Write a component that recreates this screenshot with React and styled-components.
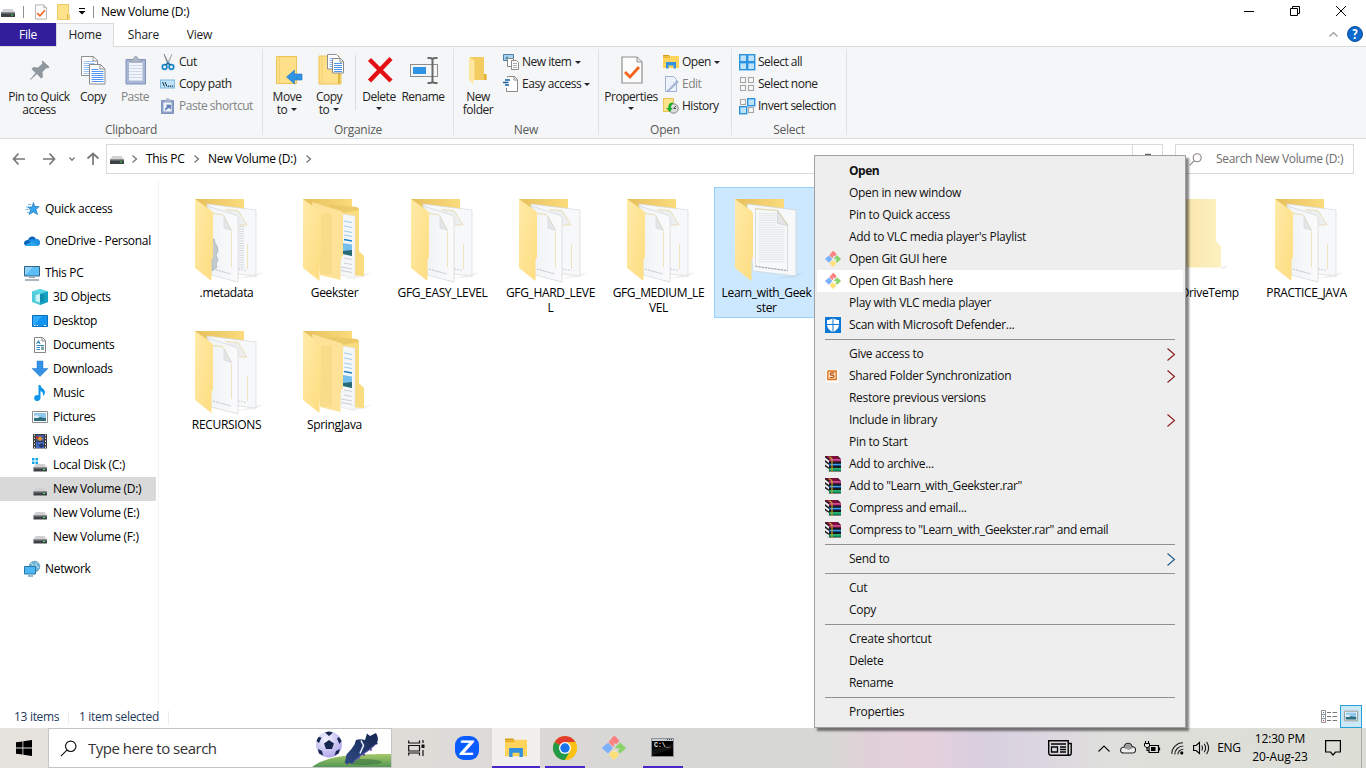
import React from 'react';
import styled, { createGlobalStyle, css } from 'styled-components';

const GlobalStyle = createGlobalStyle`
  * { box-sizing: border-box; }
  body { margin: 0; background: #fff; overflow: hidden; }
  svg { display: block; flex: none; overflow: visible; }
`;

/* ---------- frame ---------- */
const Screen = styled.div`
  width: 1366px; height: 768px; display: flex; flex-direction: column;
  position: relative; background: #fff; color: #000;
  font: 12px/16px "Open Sans", "Noto Sans", sans-serif;
  letter-spacing: -0.31px; white-space: nowrap;
`;

const TitleBar = styled.header`
  height: 23px; flex: none; display: flex; align-items: center; padding-right: 2px;
`;
const QuickTools = styled.div`
  display: flex; align-items: center; width: 101px; height: 23px;
`;
const ToolSlot = styled.span`
  width: ${p => p.$w}px; display: flex; justify-content: center;
`;
const ToolRule = styled.i` width: 1px; height: 12px; background: #8f8f8f; `;
const Grow = styled.div` flex: 1; `;
const WinButton = styled.button`
  width: 46px; height: 21px; padding: 0; border: 0; background: none; margin-bottom: 2px;
  display: flex; justify-content: center; align-items: center;
`;

const TabStrip = styled.nav`
  height: 24px; flex: none; display: flex; align-items: stretch;
  border-bottom: 1px solid #dadbdc; padding-right: 3px;
`;
const Tab = styled.div`
  width: ${p => p.$w}px; display: flex; align-items: center; justify-content: center;
  color: #222; letter-spacing: -0.2px;
  ${p => p.$kind === 'file' && css` background: #321e9b; color: #fff; `}
  ${p => p.$kind === 'open' && css`
    background: #f5f6f7; border: 1px solid #dadbdc; border-bottom: 0; margin-bottom: -1px; padding-bottom: 1px;
  `}
`;
const TabEnd = styled.div` display: flex; align-items: center; gap: 9px; margin-left: auto; margin-top: -1px; `;

/* ---------- ribbon ---------- */
const Ribbon = styled.section`
  height: 92px; flex: none; display: flex; background: #f5f6f7; letter-spacing: -0.48px;
  border-bottom: 1px solid #dadbdc; color: #222;
`;
const Group = styled.div`
  width: ${p => p.$w}px; margin: 2px 0 3px; border-right: 1px solid #e0e1e3;
  display: flex; flex-direction: column;
`;
const GroupBody = styled.div` height: 72px; flex: none; display: flex; padding-left: ${p => p.$pad}px; `;
const GroupName = styled.div` flex: none; text-align: center; color: #5a5a5a; line-height: 17px; letter-spacing: -0.25px; `;
const BigButton = styled.div`
  width: ${p => p.$w}px; flex: none; display: flex; flex-direction: column; align-items: center;
  color: ${p => (p.$off ? '#838383' : '#222')};
`;
const BigIcon = styled.span` height: 41px; display: flex; align-items: center; justify-content: center; padding: 1px 0 0 1px; margin-bottom: -0.5px; `;
const BigText = styled.span` line-height: 13px; text-align: center; white-space: nowrap; display: flex; align-items: center; gap: 4px; min-height: ${p => p.$tiny ? 11 : 13}px; `;
const BodyRule = styled.i` width: 1px; height: 55px; margin: 6px 2px 0 5px; background: #dcdddf; flex: none; `;
const SmallList = styled.div` margin-left: ${p => p.$left}px; padding-top: 2px; `;
const SmallButton = styled.div`
  height: 22px; display: flex; align-items: center; gap: 3px;
  color: ${p => (p.$off ? '#838383' : '#222')};
`;
const Caret = styled.i`
  border: 3px solid transparent; border-top-color: #222; border-bottom: 0; margin-left: ${p => p.$left || 0}px;
`;

/* ---------- address row ---------- */
const NavRow = styled.div` height: 41px; flex: none; display: flex; align-items: center; padding-bottom: 1px; `;
const NavArrows = styled.div` width: 106px; display: flex; align-items: center; `;
const AddressBox = styled.div`
  width: 1057px; height: 30px; border: 1px solid #d9d9d9; display: flex; align-items: center; padding-left: 3px;
`;
const Crumb = styled.span` width: ${p => p.$w}px; `;
const CrumbSep = styled.span` width: ${p => p.$w || 23}px; padding-right: ${p => p.$lead || 0}px; display: flex; justify-content: center; `;
const Refresh = styled.span`
  width: 30px; height: 28px; border-left: 1px solid #d9d9d9; margin-left: auto;
  display: flex; align-items: center; justify-content: center;
`;
const SearchBox = styled.div`
  width: 179px; height: 30px; margin-left: 12px; border: 1px solid #d9d9d9; color: #6d6d6d;
  display: flex; align-items: center; padding-left: 13px; gap: 14px;
`;

/* ---------- body ---------- */
const Body = styled.main` flex: 1; display: flex; min-height: 0; `;
const Tree = styled.aside` width: 159px; flex: none; border-right: 1px solid #f3f3f3; padding-top: 17px; height: 523px; `;
const TreeRow = styled.div`
  width: 156px; height: 24px; display: flex; align-items: center; gap: 5px;
  padding-left: ${p => (p.$root ? 24 : 32)}px; margin-bottom: ${p => p.$gap || 0}px;
  background: ${p => (p.$on ? '#d9d9d9' : 'none')};
`;
const Files = styled.div`
  padding: 7px 0 0 15px; display: grid; grid-template-columns: repeat(11, 106px);
  grid-auto-rows: 131px; gap: 1px 2px; align-content: start;
`;
const Tile = styled.div`
  grid-column: ${p => p.$col || 'auto'};
  height: ${p => (p.$on ? 131 : 116)}px; padding: 11px 0 0; border: 1px solid ${p => (p.$on ? '#99d1ff' : 'transparent')};
  background: ${p => (p.$on ? '#cce8ff' : 'none')};
  display: flex; flex-direction: column; align-items: center;
`;
const TileName = styled.span` line-height: 15px; text-align: center; margin: 2px 1px 0 0; letter-spacing: -0.34px; `;

const StatusBar = styled.footer`
  height: 24px; flex: none; display: flex; align-items: center; color: #1e395b; padding-left: 14px;
`;
const StatusCell = styled.span`
  width: ${p => p.$w}px; height: 13px; display: flex; align-items: center; border-right: 1px solid #ececec;
  margin: 2px 10px 0 0;
`;
const ViewSwitch = styled.div` margin-left: auto; display: flex; align-items: center; gap: 3px; padding-right: 4px; `;
const ViewOn = styled.span`
  width: 22px; height: 23px; border: 1px solid #26a0da; background: #cbe8f6; display: flex; align-items: center; justify-content: center;
`;

/* ---------- menu ---------- */
const Menu = styled.div`
  position: absolute; left: 814px; top: 155px; width: 372px; height: 573px;
  background: #eee; border: 1px solid #a0a0a0; padding: 4px 2px;
  box-shadow: 3px 3px 2px rgba(0, 0, 0, .48); color: #111; z-index: 2;
`;
const MenuItem = styled.div`
  height: 22px; display: flex; align-items: center; padding: 0 8px; 
  background: ${p => (p.$hot ? '#fff' : 'none')}; font-weight: ${p => (p.$bold ? 700 : 400)};
  letter-spacing: ${p => (p.$bold ? -0.5 : p.$tight ? -0.4 : -0.3)}px;
`;
const MenuIcon = styled.span` width: 24px; flex: none; `;
const MenuArrow = styled.span` margin-left: auto; `;
const MenuRule = styled.hr` border: 0; height: 1px; background: #919191; margin: 3px 8px; `;

/* ---------- taskbar ---------- */
const Taskbar = styled.div`
  height: 40px; flex: none; display: flex; align-items: stretch; 
  background: linear-gradient(90deg, #e6e2dd 0, #e0dcd8 390px, #dedad7 450px, #d9d8d6 560px, #d6d6d5 700px, #d7d8d3 830px, #e0d0d8 870px, #e4d0dc 930px, #d8cfdf 985px, #dbd6e0 1040px, #dfdfdb 1110px, #dcddd5 1366px);
`;
const StartButton = styled.div` width: 48px; display: flex; align-items: center; justify-content: center; `;
const TaskSearch = styled.div`
  width: 344px; background: #fff; border: 1px solid #c6c5c4; display: flex; align-items: center; padding-left: 11px;
  font-size: 15px; letter-spacing: -0.5px; color: #333; gap: 11px; position: relative; overflow: hidden;
`;
const TaskArt = styled.span` margin-left: auto; `;
const TaskButton = styled.div`
  width: ${p => p.$w}px; margin-left: ${p => p.$left || 0}px; display: flex; align-items: center; justify-content: center;
  border-bottom: 2px solid ${p => (p.$run ? '#4a25c9' : 'transparent')}; padding-top: 2px;
  background: ${p => (p.$on ? '#f1f0ef' : 'none')}; background-clip: padding-box;
`;
const Tray = styled.div` margin-left: auto; display: flex; align-items: center; width: 326px; `;
const TrayIcon = styled.span` width: ${p => p.$w}px; display: flex; justify-content: center; letter-spacing: -0.35px; `;
const Clock = styled.div` width: 68px; text-align: center; line-height: 18px; letter-spacing: -0.15px; `;
const PeekEdge = styled.i` width: 1px; align-self: stretch; background: #aaa; margin-left: auto; margin-right: 4px; `;

/* ---------- icons ---------- */
const Svg = ({ w = 16, h = w, children, ...rest }) => (
  <svg width={w} height={h} viewBox={`0 0 ${w} ${h}`} fill="none" {...rest}>{children}</svg>
);

const Drive = ({ os }) => (
  <Svg>
    {os && <path d="M0 1h2.500v2.500H0zM3.500 1H6v2.500H3.500zM0 4.500h2.500V7H0zM3.500 4.500H6V7H3.500z" fill="#12a5e8" />}
    <path d="M3.500 7h9L14.500 10.500H1.500z" fill="#cfd1d3" />
    <path d="M1.500 10.500h13.500v4H1.500z" fill="#3d4245" /><path d="M1.500 10.500h13.500v1H1.500z" fill="#8a8d90" />
    <path d="M11 12h2v1h-2z" fill="#3fe05c" />
  </Svg>
);
const SmallDrive = () => (
  <Svg w={14} h={12}>
    <path d="M2.500 3h9L14 6.500H0z" fill="#cfd1d3" /><path d="M0 6.500h14V11H0z" fill="#3d4245" />
    <path d="M0 6.500h14v1H0z" fill="#85888b" /><path d="M10 8.500h2v1h-2z" fill="#3fe05c" />
  </Svg>
);
const CheckPage = ({ w = 12, h = 16 }) => (
  <svg width={w} height={h} viewBox="0 0 22 28" fill="none">
    <path d="M1 1h15l5 5v21H1z" fill="#fcfcfc" stroke="#8f8f8f" strokeWidth="1.200" />
    <path d="M16 1v5h5" fill="#e4e4e4" stroke="#8f8f8f" strokeWidth="1" />
    <path d="M4 16l5 5 9-10" stroke="#f2641c" strokeWidth="2.800" />
  </svg>
);
const MiniFolder = () => (
  <Svg w={13} h={16}><path d="M.5.5h11v9l1 1v5H.5z" fill="#ffe28a" stroke="#eccb66" /><path d="M10.500 10v5" stroke="#d9b347" /></Svg>
);
const Pin = () => (
  <Svg w={22} h={22}><path d="M13.500 1.500l7 6.500-1.500 1.500-1.500-.5-4 4 .5 5-2 1.500-4-4.500L1.500 21l-.5-.5L6.500 14 2.500 10l2-2 4.500.5 4.500-4-.800-1.500z" fill="#8f979e" /></Svg>
);
const Lines = ({ x, y, w, n, step = 2, color = '#6aa0ea' }) => (
  <g fill={color}>{Array.from({ length: n }, (_, i) => <rect key={i} x={x} y={y + i * step} width={w} height="1" />)}</g>
);
const CopyPages = () => (
  <Svg w={25} h={29}>
    <path d="M.5.5h12l4 4v15H.5z" fill="#fff" stroke="#8f8f8f" /><path d="M12 .5v4.500h4" stroke="#8f8f8f" />
    <Lines x={2.500} y={5} w={11} n={7} color="#9cc3f5" />
    <path d="M8.500 8.500h11l4.500 4.500v15H8.500z" fill="#fff" stroke="#8a8a8a" /><path d="M19 8.500V13h5" stroke="#8a8a8a" />
    <Lines x={10.500} y={13} w={7} n={1} color="#4f95ef" /><Lines x={10.500} y={15} w={12} n={6} color="#4f95ef" />
  </Svg>
);
const Clipboard = () => (
  <Svg w={22} h={29}>
    <path d="M1 3.500h19.500v24.500H1z" fill="#a8b6d2" stroke="#8194be" />
    <path d="M4 6.500h13.500v18.500H4z" fill="#f1f4fa" /><Lines x={4} y={9} w={13.500} n={6} step={3} color="#ced8ea" />
    <path d="M5 6V3.500h3.500C8.500-.5 13-.5 13 3.500h3.500V6z" fill="#b1bac8" stroke="#8793a8" strokeWidth=".8" />
  </Svg>
);
const Scissors = () => (
  <Svg>
    <path d="M4 0l4.500 9-.5 2z" fill="#838b94" stroke="#737c86" strokeWidth=".6" />
    <path d="M12 0L7.500 9l.5 2z" fill="#c2c8ce" stroke="#9aa2aa" strokeWidth=".6" />
    <circle cx="4.600" cy="13" r="2.300" stroke="#1a86c4" strokeWidth="1.700" />
    <circle cx="11.400" cy="13" r="2.300" stroke="#1a86c4" strokeWidth="1.700" />
    <path d="M5.500 11L8 9l2.500 2" stroke="#1a6fa8" strokeWidth="1.500" />
  </Svg>
);
const CopyPath = () => (
  <Svg><rect x=".5" y="4" width="14" height="8" fill="#bfe3fa" stroke="#7fb8de" />
    <path d="M2.500 6l2 4.500M5 6l2 4.500" stroke="#14324a" /><path d="M8 9.500h1.200v1.200H8zM10 9.500h1.200v1.200H10zM12 9.500h1.200v1.200H12z" fill="#14324a" /></Svg>
);
const PasteShortcut = () => (
  <Svg><path d="M1.500 2.500h12v13h-12z" fill="#8da0c6" stroke="#7e93bd" /><path d="M3.500 4.500h8v9h-8z" fill="#f0f3f9" />
    <path d="M4.500 3.500v-2h2c0-2 2.500-2 2.500 0h2v2z" fill="#a9b4c8" />
    <path d="M5.500 12.500c0-3 1-4 3-4V10M6.500 7h4v4z" stroke="#5f7db7" fill="#5f7db7" strokeWidth=".8" /></Svg>
);
const BigFolderBase = () => (
  <><path d="M.5 1.500h20v16.500l2 1.500v10H.5z" fill="#ffe08a" stroke="#ecc455" /><path d="M3.500 2v27" stroke="#f3d170" /><path d="M20.500 19v10" stroke="#dfb63f" strokeWidth="2" /></>
);
const MoveTo = () => (
  <Svg w={28} h={30}><path d="M2.500 1.500h20v27H2.500z" fill="#ffe08a" stroke="#ecc455" /><path d="M5.500 2v26" stroke="#f3d170" /><path d="M12.500 22l8-7V19h7.500v6h-7.500v4z" fill="#2f93e4" stroke="#2378c2" strokeWidth=".6" /></Svg>
);
const CopyTo = () => (
  <Svg w={28} h={30}><g transform="translate(2.500 -.5)"><BigFolderBase /></g>
    <path d="M11.500-.5h9l3 3V14h-12z" fill="#fff" stroke="#8f8f8f" /><Lines x={13.500} y={3} w={7} n={5} color="#8ab9f5" />
    <path d="M16.500 3.500h8l3 3V18h-11z" fill="#fff" stroke="#8a8a8a" /><path d="M24 3.500V7h3.500" stroke="#8a8a8a" /><Lines x={18} y={8} w={8} n={5} color="#4f95ef" />
  </Svg>
);
const RedCross = () => (
  <Svg w={26} h={26}><path d="M2.500 2.500L24 24M24 1.500L2.500 24" stroke="#e40f12" strokeWidth="4.400" /></Svg>
);
const RenameIcon = () => (
  <Svg w={29} h={27}><rect x="1.500" y="7.500" width="27" height="12" fill="#f5f6f7" stroke="#8d8d8d" />
    <rect x="4" y="10" width="13" height="7" fill="#2f93e4" /><path d="M23.500 2v23M18.500 1h2.500c2 0 2.500 1 2.500 2 0-1 .5-2 2.500-2h2.500M18.500 26h2.500c2 0 2.500-1 2.500-2 0 1 .5 2 2.500 2h2.500" stroke="#6a6a6a" strokeWidth="2" /></Svg>
);
const NewFolder = () => (
  <Svg w={20} h={28}><path d="M1 1h14v17h2.500v6H1z" fill="#f4cd62" /><path d="M15 18h2.500v6H15z" fill="#e3b33c" /><path d="M0 1l6 4v17.500L4.500 24v4L0 24z" fill="#ffe79f" /><path d="M6 5v17" stroke="#f0c95e" strokeWidth=".8" /></Svg>
);
const NewItem = () => (
  <Svg><path d="M.5.5h10v6H.5z" fill="#a9d3f0" stroke="#4a7ea3" /><path d="M2 5l2-3 2 3" fill="#4a88ae" />
    <path d="M4.500 4.500h6v8h-6z" fill="#fff" stroke="#8a8a8a" /><path d="M8.500 6.500h5l2 2v7h-7z" fill="#fff" stroke="#8a8a8a" /><Lines x={10} y={9} w={4} n={3} color="#a8a8a8" /></Svg>
);
const EasyAccess = () => (
  <Svg><path d="M4.500 1.500V.500h7l3 3v12h-11V12" fill="#fff" stroke="#8a8a8a" /><path d="M11 .5V4h3.500" stroke="#8a8a8a" />
    <path d="M2 4h5M0 6.500h5.500M2 9h4" stroke="#175f9e" strokeWidth="1.300" /></Svg>
);
const OpenIcon = ({ w = 16 }) => (
  <svg width={w} height={w} viewBox="0 0 16 16" fill="none"><path d="M0 1h6l1 1.500H0z" fill="#d99e16" /><path d="M0 2.500h7l1-.5h8v12H0z" fill="#ffd35c" />
    <path d="M0 2.500h7v1.200H0z" fill="#e5ab20" /><path d="M3 8h10v6.500h-2.500v-3h-5v3H3z" fill="#3391dd" /></svg>
);
const EditIcon = () => (
  <Svg><path d="M2.500.5h8l3 3v12h-11z" fill="#eef2fa" stroke="#9fb2d6" /><path d="M4 15L14 4.500l1.500 1.500L7 14z" fill="#a9bcd9" stroke="#8da2c6" strokeWidth=".6" /></Svg>
);
const HistoryIcon = () => (
  <Svg><path d="M.5.500h10v13H.5z" fill="#ffe28a" stroke="#ecc455" /><circle cx="10.500" cy="10.500" r="4.700" fill="#dcdcdc" stroke="#858585" />
    <path d="M10.500 10.500L13 8M10.500 10.500H13" stroke="#555" /><path d="M10 4.500c-4 0-5 3-4.500 5.500H3l4 4 2.500-4H8C8 8 8.500 6.500 10 6z" fill="#1cae2b" /></Svg>
);
const Quad = ({ fill }) => (
  <Svg>{[[0, 0], [8, 0], [0, 8], [8, 8]].map(([x, y], i) => {
    const on = fill[i] === '1';
    const side = on ? 7 : 5;
    const inset = on ? 0.7 : 1.5;
    return <rect key={i} x={x + inset} y={y + inset} width={side} height={side} fill={on ? '#bfe3fb' : '#f8f8f8'} stroke={on ? '#2b93e0' : '#a7a7a7'} strokeWidth={on ? 1.400 : 1.100} />;
  })}</Svg>
);
const Chevron = ({ color = '#777', w = 5, h = 8, sw = 1.300 }) => (
  <Svg w={w} h={h}><path d={`M.5.5l${w - 1} ${h / 2 - .5}-${w - 1} ${h / 2 - .5}`} stroke={color} strokeWidth={sw} /></Svg>
);
const ARROWS = {
  left: 'M13 7H1.500M6.500 1.500L1.500 7l5 5.500',
  right: 'M1 7h11.500M7.500 1.500l5 5.500-5 5.500',
  up: 'M7 13V1.500M1.500 6.500L7 1.500l5.500 5',
};
const ArrowIcon = ({ to }) => (
  <Svg w={14} h={14}><path d={ARROWS[to]} stroke="#777" strokeWidth="1.700" /></Svg>
);
const Loupe = ({ w = 13, color = '#8a8088', sw = 1.100 }) => (
  <svg width={w} height={w} viewBox="0 0 13 13" fill="none"><circle cx="8.200" cy="4.800" r="4" stroke={color} strokeWidth={sw} /><path d="M5.300 7.700L.7 12.300" stroke={color} strokeWidth={sw} /></svg>
);

/* navigation pane */
const Star = () => (
  <Svg><path d="M9.500 1.500l1.200 4H15L12 8.500l1.500 5L9.500 11 5 13.500 6.500 9 4 6h4z" fill="#38a3ea" stroke="#1b78c2" strokeWidth=".7" /><path d="M4 3.500h3M2 6h2M1.500 8.500h3M3 11.500h2" stroke="#4fa9e0" strokeWidth=".8" /></Svg>
);
const OneDrive = () => (
  <Svg><path d="M4 7C5 3 10 2 12 6c3 0 4 2 4 3.500S15 13 13 13H3.500C1 13 0 11.500 0 10s1.500-3 4-3z" fill="#0a64b8" /><path d="M4 7l8 5.500h1c2 0 3-1.500 3-3S15 6 12 6z" fill="#1d93e6" /><path d="M1 12l7-3.500 6.500 4c-.5.500-1 .5-1.500.5H3.500C2.500 13 1.500 12.700 1 12z" fill="#2aa7f0" /></Svg>
);
const Pc = () => (
  <Svg><path d="M.5 1.500h15v9.500H.5z" fill="#5cbcf5" stroke="#35627f" /><path d="M1 2h8L1 10z" fill="#90d4fa" /><path d="M5 12.500h6" stroke="#98a3aa" /><path d="M1 15h14" stroke="#7f8f9b" strokeWidth="1.300" /></Svg>
);
const Cube = () => (
  <Svg><path d="M0 2.500L8 0l8 2.500v10.500l-8 3-8-3z" fill="#4fcbdb" /><path d="M0 2.500L8 0l8 2.500-8 2.500z" fill="#5bd6e2" /><path d="M8 5l8-2.500v10.500l-8 3z" fill="#14a0c0" /><path d="M3.500 6L8 4.800v8.700L3.500 12z" fill="#c9f4f7" /><path d="M8 4.800l4 1.200v6L8 13.500z" fill="#0f8cae" /></Svg>
);
const DesktopIcon = () => (
  <Svg><path d="M.5 2.500h15v11H.5z" fill="#1294f0" stroke="#0a6fba" /><path d="M1 3h9L3 12H1z" fill="#2fa9fb" /><path d="M2 12.500h1.500M5 12.500h1M12 12.500h2" stroke="#fff" /></Svg>
);
const DocIcon = () => (
  <Svg><path d="M2.500.5h8l3 3v12h-11z" fill="#fff" stroke="#858585" /><path d="M10 .5V4h3.500" stroke="#858585" /><path d="M4.500 7l2-3.500 1.500 3.500M5 5.500h3" stroke="#2c87bf" /><Lines x={4.500} y={8} w={7.500} n={1} color="#2c87bf" /><Lines x={4.500} y={10} w={3.500} n={2} color="#2c87bf" /><path d="M9 9.500h3V13H9z" fill="#7fa7a4" /></Svg>
);
const DownIcon = () => (
  <Svg><path d="M5 0h6v7.500h5l-8 8-8-8h5z" fill="#3391e6" stroke="#2576c0" strokeWidth=".5" /></Svg>
);
const MusicIcon = () => (
  <Svg><path d="M6.500 0h2c0 3 4.500 4 4.500 7 0 2-1 3-2 4 .5-3-.5-4-2.500-5v7a3.200 3 0 1 1-2-2.800z" fill="#0d96ea" /></Svg>
);
const PictureIcon = ({ w = 16 }) => (
  <svg width={w} height={w} viewBox="0 0 16 16" fill="none"><path d="M.5 2.500h15v11H.5z" fill="#fff" stroke="#8d8d8d" /><path d="M2 4h12v8H2z" fill="#8fc8ee" /><path d="M2 8c3-2 6 1 12 1v3H2z" fill="#2f6f7c" /><path d="M2 7l3-1 3 2-2 1H2z" fill="#dceefa" /></svg>
);
const VideoIcon = () => (
  <Svg><path d="M1 1h14v14.500H1z" fill="#3a3a3a" /><path d="M2.500 1.500v14M13.500 1.500v14" stroke="#ddd" strokeDasharray="1.500 1.500" /><path d="M4 2h8v6H4z" fill="#3d58a8" /><path d="M4 9h8v6H4z" fill="#4670c8" /><path d="M5 6l3-3 3 3-3 2z" fill="#e2902f" /><path d="M4 10l3 2 3-2 2 3-3 2z" fill="#26346c" /><path d="M4 3h2v3H4z" fill="#b53a2e" /></Svg>
);
const NetworkIcon = () => (
  <Svg><circle cx="10.500" cy="5.500" r="5.300" fill="#6db5d4" stroke="#3e7fa3" strokeWidth=".6" /><path d="M7 2c3 2 3 5 1 8M13 1.500c-2 2-1 4 2 5" stroke="#d4ecf5" /><path d="M.5 5.500h11v7.500H.5z" fill="#4db7f5" stroke="#2b76a6" /><path d="M4 15h5" stroke="#2b76a6" /></Svg>
);

/* large folders */
const FLAP = 'M0 0L14 10Q18 12.500 18 15V58L16.500 61V82L0 69z';
const FolderArt = ({ kind }) => (
  <Svg w={64} h={84}>
    <defs>
      <linearGradient id="flap" x1="0" y1="0" x2="1" y2="1"><stop offset="0" stopColor="#ffeaa8" /><stop offset="1" stopColor="#fedd80" /></linearGradient>
      <linearGradient id="back" x1="0" y1="0" x2="1" y2="0"><stop offset="0" stopColor="#e6c05c" /><stop offset="1" stopColor="#fbdb7c" /></linearGradient>
      <linearGradient id="sheet" x1="0" y1="0" x2="1" y2="0"><stop offset="0" stopColor="#eff2f4" /><stop offset="1" stopColor="#fbfbfc" /></linearGradient>
      <linearGradient id="plain" x1="0" y1="0" x2="1" y2="0"><stop offset="0" stopColor="#f6dea0" /><stop offset="1" stopColor="#fdf1c0" /></linearGradient>
    </defs>
    {kind === 'closed' && (<>
      <path d="M53 69l8-3-4 4z" fill="#eee" />
      <path d="M-5 0h54v42l5 5v21.500H-5z" fill="url(#plain)" />
    </>)}
    {kind !== 'closed' && (<>
      <path d="M40 80l29-7-8 5z" fill="#000" opacity=".06" />
      <path d="M0 0h49v60H0z" fill="url(#back)" />
    </>)}
    {(kind === 'pages' || kind === 'gear') && (<>
      <path d="M12 5l49 6v66l-18-2L16 70z" fill="#f7f8f9" stroke="#d6d8da" strokeWidth=".7" />
      <path d="M30 10.500l13 1L52 26h-8" fill="#eceeef" stroke="#ead9a4" strokeWidth=".8" />
      {kind === 'gear' && <Lines x={44} y={27} w={5} n={18} step={2.400} color="#d3d7da" />}
      <path d="M52.500 45v25" stroke="#eddcae" strokeWidth=".8" />
      <path d="M43 70l9 1.500" stroke="#b9bdc0" strokeDasharray="2 1" strokeWidth=".7" />
      <path d="M13 7l27 9q3 1 3 3v64L16 76z" fill="url(#sheet)" stroke="#d3d6d8" strokeWidth=".7" />
      <path d="M17 14.500l10 1 2 2 7.500 14" stroke="#e8d295" strokeWidth=".8" />
      <path d="M29 18l7.500 13.500L29 29z" fill="#e4e7e9" stroke="#cfd3d6" strokeWidth=".6" />
      <path d="M36.500 33v35" stroke="#eddcae" strokeWidth=".8" />
      <path d="M18 70l18 5" stroke="#aab0b4" strokeDasharray="2 1" strokeWidth=".8" />
    </>)}
    {kind === 'gear' && <path d="M16 40h3l1 4 2 3 1 5-2 4 2 5-2 4 1 3-5 4z" fill="#c3cad0" stroke="#aab1b7" strokeWidth=".8" />}
    {kind === 'text' && (<>
      <path d="M12 5l49 6v66l-43-5z" fill="#f7f8f9" stroke="#cdd2d5" strokeWidth=".7" />
      <path d="M20.500 10l22 1.500L52.500 26v46l-32-5z" fill="#f7f8f9" stroke="#c9cccf" strokeWidth=".7" />
      <path d="M20 9.500l23 2L53 26" stroke="#ead595" strokeWidth=".8" />
      <g opacity=".75"><Lines x={23.500} y={14} w={18} n={6} step={2.300} color="#dddfe1" />
      <Lines x={23.500} y={27.800} w={26} n={16} step={2.300} color="#dddfe1" /></g>
      <path d="M42.500 12l10 14.500-10-2z" fill="#e2e4e6" stroke="#c6cacd" strokeWidth=".6" />
      <path d="M20.500 67.500l32 4" stroke="#7f8c95" strokeDasharray="2 1.200" strokeWidth=".8" />
    </>)}
    {kind === 'nested' && (<>
      <path d="M10 4l43 4q3 .5 3 3v41l5 5v20l-18-1z" fill="#f9dc80" />
      <path d="M10 4l43 4q3 .5 3 3L40 14z" fill="#edca68" />
      <path d="M40 15l12 2v62.500L37 76z" fill="#f4f6f7" stroke="#dcdfe0" strokeWidth=".5" />
      <path d="M41 22l8 1.500M41 27l8 1.500M41 32l8 1.500M41 36l8 1.500" stroke="#9fcdea" />
      <path d="M41 40.500l8 1.500" stroke="#1883c8" strokeWidth="1.500" />
      <path d="M40 44l9 1.500V57l-9-2z" fill="#74bfec" /><path d="M40 52l9-1v6l-9-2z" fill="#286b74" />
      <path d="M41 59l8 1.500M41 64l8 1.500M38 68l11 2M38 71.500l11 2" stroke="#cdd1d4" />
      <path d="M9 3l29 9q2 .8 2 3v42l-2.500 3v21L17 76z" fill="#fde297" />
      <path d="M18 15l8-1q3 1 3 4v58l-12-1z" fill="#f8dc89" />
    </>)}
    {kind !== 'closed' && <path d={FLAP} fill="url(#flap)" />}
  </Svg>
);

/* menu icons */
const GitIcon = ({ w = 16 }) => (
  <svg width={w} height={w} viewBox="0 0 24 24" fill="none">
    <path d="M12 0q1 0 1.700.8L17.500 5 14 8.500 9.500 4 8 5.500 12.500 10l-1 .8L6.500 6 11 .8Q11.500 0 12 0z" fill="#fb8080" />
    <path d="M9.500 4l3 3-1.500 3.500-4-4z" fill="#fb8080" />
    <path d="M6 6.800l5 5.200-5 5.500L.6 12.800q-.8-.8 0-1.600z" fill="#7db0fb" />
    <path d="M18 6.500l5.400 4.700q.8.800 0 1.600L18 17.500l-2-2 1.500-3.500L14 12.500l-1-1z" fill="#8ad36a" />
    <path d="M12 13.200l5.200 5-4.400 5.200q-.8.800-1.600 0L6.800 18.200z" fill="#fde07a" />
    <path d="M10.500 15l4 .5" stroke="#eee" strokeWidth=".8" />
  </svg>
);
const DefenderIcon = () => (
  <Svg><path d="M0 0h16v16H0z" fill="#0a78d6" /><path d="M8 1.200c2 1.300 4 1.700 6 1.800v4c0 4-2.500 6.500-6 8-3.500-1.500-6-4-6-8V3c2-.1 4-.5 6-1.800z" fill="#fff" /><path d="M7.500 1h1v14h-1zM2 7h12v1H2z" fill="#0a78d6" /></Svg>
);
const SyncIcon = () => (
  <Svg><path d="M1.500 1.500h12v13h-12z" fill="#fff" /><path d="M3.300 3h7.900v8.500H2.800V4z" fill="#fbe3c8" stroke="#dd7016" strokeWidth="1.300" /><path d="M9.300 4.900H6.400c-1.500 0-1.500 2 0 2.200h1.200c1.700 0 1.700 2.400 0 2.400H4.800" stroke="#b84a08" strokeWidth="1.200" /></Svg>
);
const RarIcon = () => (
  <Svg><path d="M0 0h13l3 3v12.500H4L0 12z" fill="#1a1a1a" /><path d="M0 0h12.500L15 3H4z" fill="#7c0d3c" />
    <path d="M4 3h12v2.500H4z" fill="#a51662" /><path d="M5 3.500h11v.8H5z" fill="#ef86c4" />
    <path d="M4 7.500h12V10H4z" fill="#0f4d9b" /><path d="M5 8h11v.8H5z" fill="#55b4f2" />
    <path d="M4 12h12v3H4z" fill="#07824b" /><path d="M5 12.500h11v.9H5z" fill="#4be0a0" />
    <path d="M0 1.500l4 3V7L0 4zM0 6l4 3v2.500L0 8.500zM0 10.500l4 2.500v2.500l-4-3z" fill="#f0f0f0" />
    <path d="M5 1l2 2v12.500M3.500 1h2" stroke="#c4a52a" strokeWidth="1.200" />
  </Svg>
);

/* taskbar icons */
const WinLogo = () => <Svg><path d="M0 2.300L6.500 1.400v6.200H0zM7.300 1.300L16 0v7.600H7.300zM0 8.400h6.500v6.200L0 13.700zM7.300 8.400H16V16l-8.700-1.300z" fill="#000" /></Svg>;
const Soccer = () => (
  <Svg w={80} h={38}>
    <defs>
      <linearGradient id="grass" x1="0" y1="0" x2="0" y2="1"><stop offset="0" stopColor="#a6c868" /><stop offset="1" stopColor="#4d9455" /></linearGradient>
      <radialGradient id="ball" cx=".4" cy=".3" r=".8"><stop offset="0" stopColor="#f4f4ff" /><stop offset="1" stopColor="#a69de8" /></radialGradient>
      <linearGradient id="boot" x1="0" y1="1" x2="1" y2="0"><stop offset="0" stopColor="#2f4a86" /><stop offset="1" stopColor="#14264f" /></linearGradient>
    </defs>
    <path d="M0 39C14 26 45 25 80 25v14z" fill="url(#grass)" /><ellipse cx="52" cy="33" rx="19" ry="3" fill="#3c7440" opacity=".6" />
    <circle cx="18" cy="15.500" r="13" fill="url(#ball)" />
    <path d="M18 11l5 3.500-2 5.500h-6l-2-5.500zM14 3.500l4-1 4 1-4 3.500zM5.500 12l2-4 3 .5-2.500 5.500zM28 8l2.500 4-2 3-2.500-5.500zM7 20l4 2 1 4.500-4-2zM25 22l4-2-1.500 4.500-4 2z" fill="#17264f" />
    <path d="M36 33.500v2M41 32v3M47 27.500l1.500 2M52 24.500l1.500 2M59 19.500l1.500 2M65 14l1.500 1" stroke="#5a3fae" strokeWidth="2" />
    <path d="M34 33l1.500-7.500Q41 20 43.500 15.500L45 11q4-1.500 9 0l2-6.500 3 2.500 6-3q3.500 6 .5 11l-7.500 6.500-9 6-6 5.500-6.500 1.500q-2.500 0-2.500-1.500z" fill="url(#boot)" />
    <path d="M50 11.500l2.500 5-3.500 8" stroke="#e9ecff" strokeWidth="1.600" />
    <path d="M65 15l-7 6-9 6-6 5.500" stroke="#7a62cc" strokeWidth=".9" />
  </Svg>
);
const TaskView = () => (
  <Svg w={17} h={16}><path d="M.7.500V3h10.800V.5M.7 15.500V13h10.800v2.500M.7 5.500h10.800v5.500H.7z" stroke="#111" strokeWidth="1.200" /><path d="M15 0v3M15 10v6" stroke="#111" strokeWidth="1.200" /><path d="M13.500 4.500h3V8h-3z" fill="#111" /></Svg>
);
const LogoText = styled.text` font-family: ${p => p.$mono ? '"Liberation Mono", monospace' : '"Lato", sans-serif'}; font-weight: ${p => p.$mono ? 700 : 900}; font-size: ${p => p.$size}px; letter-spacing: 0; `;
const ZoomLogo = () => (
  <Svg w={24} h={24}><rect width="24" height="24" rx="9" fill="#0b5cff" /><LogoText x="10.500" y="19" textAnchor="middle" $size={20} fill="#fff" transform="translate(-.2 0) scale(1.200 1) skewX(-3)">Z</LogoText></Svg>
);
const Chrome = () => (
  <Svg w={24} h={24}><circle cx="12" cy="12" r="12" fill="#fbc116" /><path d="M12 12L1.600 6A12 12 0 0 1 22.400 6z" fill="#e33b2e" /><path d="M12 12L1.600 6A12 12 0 0 0 12 24l5.200-9z" fill="#249a48" /><path d="M12 6h10.400A12 12 0 0 1 12 24l5.200-9z" fill="#fbc116" />
    <circle cx="12" cy="12" r="6" fill="#fff" /><circle cx="12" cy="12" r="4.700" fill="#1a73e8" /></Svg>
);
const Terminal = () => (
  <Svg w={24} h={20}><path d="M.5.5h22v18H.5z" fill="#000" stroke="#8a8f94" /><path d="M1 1h21v2H1z" fill="#c6ccd1" /><path d="M16 1.500h1M18 1.500h1M20 1.500h1" stroke="#445" />
    <LogoText x="3" y="9" $mono $size={6.5} fill="#eee">C:\_</LogoText><path d="M1 12l21-6v4L1 18z" fill="#fff" opacity=".08" /></Svg>
);
const News = () => (
  <Svg w={24} h={16}><path d="M.7.700h19.500v14.500H2.500Q.7 15 .7 13zM20.500 3.500h2.700V13q0 2.200-2.200 2.200h-1" stroke="#000" strokeWidth="1.400" /><path d="M3 4h15M12 7h6M12 9.500h6M12 12h6" stroke="#000" strokeWidth="1.300" /><path d="M3.500 7h6v5h-6z" stroke="#000" strokeWidth="1.300" /></Svg>
);
const CloudIcon = () => (
  <Svg w={16} h={12}><path d="M4 5C5 0 11 0 12 4.500c5 .5 4.500 6.500 0 6.500H4C-.5 11-.5 5.500 4 5z" fill="#eee" /><path d="M2 5.500L4.500 5C5.500 1 11 1 11.700 5L14 5.500 9 8z" fill="#9b9b9b" /><path d="M4 5C5 0 11 0 12 4.500c5 .5 4.500 6.500 0 6.500H4C-.5 11-.5 5.500 4 5z" stroke="#222" strokeWidth="1.100" /></Svg>
);
const Battery = () => (
  <Svg w={16} h={14}><path d="M5 4.500h9.500v7H5zM15.500 6.500v3" stroke="#000" strokeWidth="1.200" /><path d="M7 6h4.500v4H7z" fill="#000" /><path d="M1.500 0v2.500M4.500 0v2.500M3 6v3.500h2" stroke="#000" strokeWidth="1.100" /><path d="M.5 2.500h5V5L4 6.500H2L.5 5z" fill="#dedfd8" stroke="#000" /></Svg>
);
const Wifi = () => (
  <Svg w={13} h={13}><path d="M.8 12A11 11 0 0 1 12 .8M3.800 12.500A8.500 8.500 0 0 1 12.300 4M6.800 12.500a5.500 5.500 0 0 1 5.500-5.300" stroke="#222" strokeWidth="1.100" /><circle cx="10.800" cy="10.900" r="1.600" fill="#000" /></Svg>
);
const Speaker = () => (
  <Svg w={17} h={14}><path d="M.6 4.500h2.500L6.500 1.500v11L3.100 9.500H.6z" stroke="#000" strokeWidth="1.100" /><path d="M8.800 4.500q1.500 2.500 0 5M11.200 2.700q2.800 4.300 0 8.600M13.600 1q4 6 0 12" stroke="#111" strokeWidth="1.100" /></Svg>
);
const Bell = () => <Svg w={16} h={16}><path d="M.6.600h14.800V12H10.500L8 15 5.500 12H.6z" stroke="#000" strokeWidth="1.200" /></Svg>;
const ListView = () => (
  <Svg w={16} h={13}><path d="M.5.5h4v12h-4zM.5 4.500h4M.5 8.500h4" stroke="#8f8f8f" /><path d="M6 2.500h4M11.500 2.500H16M6 6.500h4M11.500 6.500H16M6 10.500h4M11.500 10.500H16" stroke="#777" /><path d="M2 10h1v1H2z" fill="#c33" /><path d="M2 6h1v1H2zM2 2h1v1H2z" fill="#37a" /></Svg>
);
const HelpIcon = () => (
  <Svg><circle cx="8" cy="8" r="7.500" fill="#0c69cd" stroke="#0a4f9c" /><LogoText x="8" y="12.500" textAnchor="middle" $size={12.500} fill="#fff">?</LogoText></Svg>
);

/* ---------- data ---------- */
const TREE = [
  ['Quick access', <Star />, { $root: true, $gap: 8 }],
  ['OneDrive - Personal', <OneDrive />, { $root: true, $gap: 8 }],
  ['This PC', <Pc />, { $root: true }],
  ['3D Objects', <Cube />], ['Desktop', <DesktopIcon />], ['Documents', <DocIcon />],
  ['Downloads', <DownIcon />], ['Music', <MusicIcon />], ['Pictures', <PictureIcon />],
  ['Videos', <VideoIcon />], ['Local Disk (C:)', <Drive os />],
  ['New Volume (D:)', <Drive />, { $on: true }], ['New Volume (E:)', <Drive />],
  ['New Volume (F:)', <Drive />, { $gap: 8 }],
  ['Network', <NetworkIcon />, { $root: true }],
];

const FILES = [
  [['.metadata'], 'gear'], [['Geekster'], 'nested'], [['GFG_EASY_LEVEL'], 'pages'],
  [['GFG_HARD_LEVE', 'L'], 'pages'], [['GFG_MEDIUM_LE', 'VEL'], 'pages'],
  [['Learn_with_Geek', 'ster'], 'text', { $on: true }],
  [['OneDriveTemp'], 'closed', { $col: 10 }], [['PRACTICE_JAVA'], 'pages'],
  [['RECURSIONS'], 'pages'], [['SpringJava'], 'nested'],
];

const MENU = [
  { t: 'Open', bold: true }, { t: 'Open in new window' }, { t: 'Pin to Quick access' },
  { t: "Add to VLC media player's Playlist" }, { t: 'Open Git GUI here', icon: <GitIcon /> },
  { t: 'Open Git Bash here', icon: <GitIcon />, hot: true }, { t: 'Play with VLC media player' },
  { t: 'Scan with Microsoft Defender...', icon: <DefenderIcon /> }, null,
  { t: 'Give access to', sub: '#8c1a1a' }, { t: 'Shared Folder Synchronization', icon: <SyncIcon />, sub: '#8c1a1a' },
  { t: 'Restore previous versions' }, { t: 'Include in library', sub: '#8c1a1a' }, { t: 'Pin to Start' },
  { t: 'Add to archive...', icon: <RarIcon /> }, { t: 'Add to "Learn_with_Geekster.rar"', icon: <RarIcon />, tight: true },
  { t: 'Compress and email...', icon: <RarIcon /> }, { t: 'Compress to "Learn_with_Geekster.rar" and email', icon: <RarIcon />, tight: true }, null,
  { t: 'Send to', sub: '#1a5a8c' }, null, { t: 'Cut' }, { t: 'Copy' }, null,
  { t: 'Create shortcut' }, { t: 'Delete' }, { t: 'Rename' }, null, { t: 'Properties' },
];

const Big = ({ w, icon, lines, off, caret }) => (
  <BigButton $w={w} $off={off}>
    <BigIcon>{icon}</BigIcon>
    {lines.map((l, i) => (
      <BigText key={i} $tiny={!l}>{l}{caret && i === lines.length - 1 && <Caret />}</BigText>
    ))}
  </BigButton>
);
const Small = ({ icon, text, off, caret }) => (
  <SmallButton $off={off}>{icon}<span>{text}</span>{caret && <Caret />}</SmallButton>
);

export default function App() {
  return (
    <Screen>
      <GlobalStyle />
      <TitleBar>
        <QuickTools>
          <ToolSlot $w={16}><SmallDrive /></ToolSlot>
          <ToolSlot $w={15}><ToolRule /></ToolSlot>
          <ToolSlot $w={20}><CheckPage /></ToolSlot>
          <ToolSlot $w={24}><MiniFolder /></ToolSlot>
          <ToolSlot $w={13}><Svg w={8} h={7}><path d="M1 .5h6" stroke="#000" /><path d="M.5 3h7L4 6.500z" fill="#000" /></Svg></ToolSlot>
          <ToolSlot $w={10}><ToolRule /></ToolSlot>
        </QuickTools>
        <span>New Volume (D:)</span>
        <Grow />
        <WinButton><Svg w={10} h={10}><path d="M0 5.500h10" stroke="#000" /></Svg></WinButton>
        <WinButton><Svg w={10} h={10}><path d="M.5 2.500h7v7h-7zM2.500 2.500v-2h7v7h-2" stroke="#000" /></Svg></WinButton>
        <WinButton><Svg w={10} h={10}><path d="M0 0l10 10M10 0L0 10" stroke="#000" /></Svg></WinButton>
      </TitleBar>
      <TabStrip>
        <Tab $w={56} $kind="file">File</Tab>
        <Tab $w={58} $kind="open">Home</Tab>
        <Tab $w={59}>Share</Tab>
        <Tab $w={53}>View</Tab>
        <TabEnd>
          <Svg w={9} h={5}><path d="M.5 4.500l4-4 4 4" stroke="#999" strokeWidth="1.200" /></Svg>
          <HelpIcon />
        </TabEnd>
      </TabStrip>

      <Ribbon>
        <Group $w={263}>
          <GroupBody $pad={4}>
            <Big w={70} icon={<Pin />} lines={['Pin to Quick', 'access']} />
            <Big w={38} icon={<CopyPages />} lines={['Copy']} />
            <Big w={46} icon={<Clipboard />} lines={['Paste']} off />
            <SmallList $left={2}>
              <Small icon={<Scissors />} text="Cut" />
              <Small icon={<CopyPath />} text="Copy path" />
              <Small icon={<PasteShortcut />} text="Paste shortcut" off />
            </SmallList>
          </GroupBody>
          <GroupName>Clipboard</GroupName>
        </Group>
        <Group $w={191}>
          <GroupBody $pad={3}>
            <Big w={42} icon={<MoveTo />} lines={['Move', 'to']} caret />
            <Big w={42} icon={<CopyTo />} lines={['Copy', 'to']} caret />
            <BodyRule />
            <Big w={42} icon={<RedCross />} lines={['Delete', '']} caret />
            <Big w={46} icon={<RenameIcon />} lines={['Rename']} />
          </GroupBody>
          <GroupName>Organize</GroupName>
        </Group>
        <Group $w={145}>
          <GroupBody $pad={2}>
            <Big w={44} icon={<NewFolder />} lines={['New', 'folder']} />
            <SmallList $left={3}>
              <Small icon={<NewItem />} text="New item" caret />
              <Small icon={<EasyAccess />} text="Easy access" caret />
            </SmallList>
          </GroupBody>
          <GroupName>New</GroupName>
        </Group>
        <Group $w={133}>
          <GroupBody $pad={2}>
            <Big w={60} icon={<CheckPage w={22} h={28} />} lines={['Properties', '']} caret />
            <SmallList $left={2}>
              <Small icon={<OpenIcon />} text="Open" caret />
              <Small icon={<EditIcon />} text="Edit" off />
              <Small icon={<HistoryIcon />} text="History" />
            </SmallList>
          </GroupBody>
          <GroupName>Open</GroupName>
        </Group>
        <Group $w={115}>
          <GroupBody $pad={5}>
            <SmallList $left={2}>
              <Small icon={<Quad fill="1111" />} text="Select all" />
              <Small icon={<Quad fill="0000" />} text="Select none" />
              <Small icon={<Quad fill="0110" />} text="Invert selection" />
            </SmallList>
          </GroupBody>
          <GroupName>Select</GroupName>
        </Group>
      </Ribbon>

      <NavRow>
        <NavArrows>
          <ToolSlot $w={38}><ArrowIcon to="left" /></ToolSlot>
          <ToolSlot $w={22}><ArrowIcon to="right" /></ToolSlot>
          <ToolSlot $w={24}><Svg w={6} h={4}><path d="M.5.5L3 3.200 5.500.5" stroke="#777" strokeWidth="1.300" /></Svg></ToolSlot>
          <ToolSlot $w={18}><ArrowIcon to="up" /></ToolSlot>
        </NavArrows>
        <AddressBox>
          <SmallDrive />
          <CrumbSep $w={22} $lead={2}><Chevron /></CrumbSep>
          <Crumb $w={39}>This PC</Crumb>
          <CrumbSep><Chevron /></CrumbSep>
          <Crumb $w={89}>New Volume (D:)</Crumb>
          <CrumbSep><Chevron /></CrumbSep>
          <Refresh><Svg w={12} h={12}><path d="M3 1.500h6" stroke="#666" strokeWidth="1.500" /></Svg></Refresh>
        </AddressBox>
        <SearchBox><Loupe />Search New Volume (D:)</SearchBox>
      </NavRow>

      <Body>
        <Tree>
          {TREE.map(([name, icon, opts]) => <TreeRow key={name} {...opts}>{icon}{name}</TreeRow>)}
        </Tree>
        <Files>
          {FILES.map(([lines, kind, opts]) => (
            <Tile key={lines[0]} {...opts}>
              <FolderArt kind={kind} />
              <TileName>{lines.map(l => <div key={l}>{l}</div>)}</TileName>
            </Tile>
          ))}
        </Files>
      </Body>

      <StatusBar>
        <StatusCell $w={55}>13 items</StatusCell>
        <StatusCell $w={90}>1 item selected</StatusCell>
        <ViewSwitch><ListView /><ViewOn><PictureIcon w={14} /></ViewOn></ViewSwitch>
      </StatusBar>

      <Taskbar>
        <StartButton><WinLogo /></StartButton>
        <TaskSearch><Loupe w={17} color="#111" sw={0.9} />Type here to search<TaskArt><Soccer /></TaskArt></TaskSearch>
        <TaskButton $w={48}><TaskView /></TaskButton>
        <TaskButton $w={48} $left={3}><ZoomLogo /></TaskButton>
        <TaskButton $w={48} $left={1} $on $run><OpenIcon w={22} /></TaskButton>
        <TaskButton $w={40} $left={5} $run><Chrome /></TaskButton>
        <TaskButton $w={40} $left={9}><GitIcon w={24} /></TaskButton>
        <TaskButton $w={40} $left={9} $run><Terminal /></TaskButton>
        <Tray>
          <TrayIcon $w={40}><News /></TrayIcon>
          <TrayIcon $w={12} />
          <TrayIcon $w={24}><Svg w={12} h={7}><path d="M.5 6.500L6 1l5.500 5.500" stroke="#111" strokeWidth="1.200" /></Svg></TrayIcon>
          <TrayIcon $w={24}><CloudIcon /></TrayIcon>
          <TrayIcon $w={24}><Battery /></TrayIcon>
          <TrayIcon $w={26}><Wifi /></TrayIcon>
          <TrayIcon $w={22}><Speaker /></TrayIcon>
          <TrayIcon $w={34}>ENG</TrayIcon>
          <Clock>12:30 PM<br />20-Aug-23</Clock>
          <TrayIcon $w={38}><Bell /></TrayIcon>
          <PeekEdge />
        </Tray>
      </Taskbar>

      <Menu>
        {MENU.map((m, i) => m ? (
          <MenuItem key={i} $hot={m.hot} $bold={m.bold} $tight={m.tight}>
            <MenuIcon>{m.icon}</MenuIcon>{m.t}
            {m.sub && <MenuArrow><Chevron color={m.sub} w={8} h={13} sw={1.100} /></MenuArrow>}
          </MenuItem>
        ) : <MenuRule key={i} />)}
      </Menu>
    </Screen>
  );
}
